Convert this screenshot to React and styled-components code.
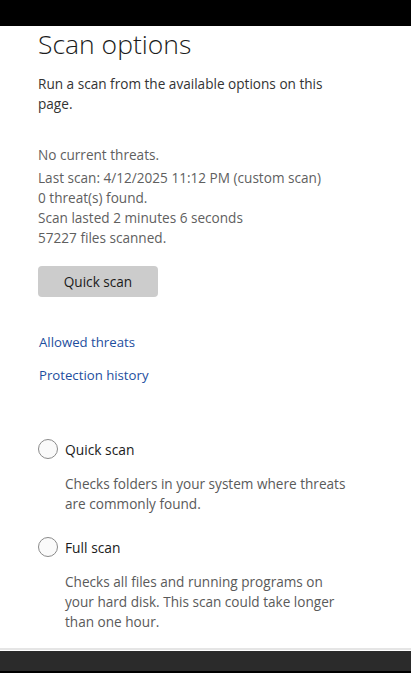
import React from "react";
import styled, { createGlobalStyle } from "styled-components";

const Global = createGlobalStyle`
  html, body { margin: 0; padding: 0; background: #000; }
  body { font-family: "Segoe UI", "Open Sans", "Noto Sans", sans-serif; }
  #root { width: 411px; height: 673px; }
`;

const Frame = styled.div`
  width: 411px;
  height: 673px;
  display: flex;
  flex-direction: column;
  background: #000;
  overflow: hidden;
`;

const TopBar = styled.div`
  height: 26px;
  flex: none;
  background: #000;
`;

const Page = styled.main`
  flex: 1;
  background: #fff;
  padding: 1px 0 0 38px;
  display: flex;
  flex-direction: column;
  border-bottom: 2px solid #e5e5e5;
  overflow: hidden;
`;

const BottomBar = styled.div`
  height: 20px;
  flex: none;
  background: #2b2b2b;
  border-top: 1px solid #fff;
  margin-bottom: 2px;
`;

const Title = styled.h1`
  margin: 0;
  font-family: "Open Sans", sans-serif;
  font-weight: 300;
  font-size: 26.5px;
  line-height: 34px;
  color: #1b1b1b;
`;

const Lead = styled.p`
  margin: 13px 0 0;
  width: 320px;
  font-family: "Open Sans", sans-serif;
  font-size: 13.6px;
  line-height: 20px;
  color: #333;
`;

const Status = styled.div`
  margin-top: 31px;
  font-family: "Open Sans", sans-serif;
  font-size: 13.6px;
  line-height: 20px;
  color: #5f5f5f;
`;

const StatusLine = styled.div`
  margin-top: ${(p) => (p.$gap ? "3px" : "0")};
`;

const Button = styled.button`
  margin-top: 18px;
  width: 120px;
  height: 31px;
  border: none;
  border-radius: 4px;
  background: #cccccc;
  font-family: "Open Sans", sans-serif;
  font-size: 13.6px;
  color: #1b1b1b;
  padding: 0;
`;

const Links = styled.div`
  margin-top: 35px;
  display: flex;
  flex-direction: column;
  align-items: flex-start;
  gap: 13px;
`;

const Link = styled.a`
  font-family: "Open Sans", sans-serif;
  font-size: 13.2px;
  line-height: 20px;
  color: #1d4e9e;
  text-decoration: none;
  margin-left: 1px;
`;

const Options = styled.div`
  margin-top: 54px;
  display: flex;
  flex-direction: column;
  gap: 23px;
`;

const Option = styled.div`
  display: flex;
  flex-direction: column;
`;

const RadioRow = styled.label`
  display: flex;
  align-items: center;
  gap: 7px;
  height: 20px;
`;

const Radio = styled.span`
  width: 18px;
  height: 18px;
  border: 1px solid #8a8a8a;
  border-radius: 50%;
  background: #fafafa;
  flex: none;
`;

const RadioLabel = styled.span`
  font-family: "Open Sans", sans-serif;
  font-size: 13.8px;
  color: #1b1b1b;
`;

const Desc = styled.p`
  margin: 15px 0 0 27px;
  width: 288px;
  font-family: "Open Sans", sans-serif;
  font-size: 13.6px;
  line-height: 20px;
  color: #5a5a5a;
`;

export default function App() {
  return (
    <>
      <Global />
      <Frame>
        <TopBar />
        <Page>
          <Title>Scan options</Title>
          <Lead>Run a scan from the available options on this page.</Lead>
          <Status>
            <StatusLine>No current threats.</StatusLine>
            <StatusLine $gap>Last scan: 4/12/2025 11:12 PM (custom scan)</StatusLine>
            <StatusLine>0 threat(s) found.</StatusLine>
            <StatusLine>Scan lasted 2 minutes 6 seconds</StatusLine>
            <StatusLine>57227 files scanned.</StatusLine>
          </Status>
          <div>
            <Button>Quick scan</Button>
          </div>
          <Links>
            <Link href="#">Allowed threats</Link>
            <Link href="#">Protection history</Link>
          </Links>
          <Options>
            <Option>
              <RadioRow>
                <Radio />
                <RadioLabel>Quick scan</RadioLabel>
              </RadioRow>
              <Desc>Checks folders in your system where threats are commonly found.</Desc>
            </Option>
            <Option>
              <RadioRow>
                <Radio />
                <RadioLabel>Full scan</RadioLabel>
              </RadioRow>
              <Desc>Checks all files and running programs on your hard disk. This scan could take longer than one hour.</Desc>
            </Option>
          </Options>
        </Page>
        <BottomBar />
      </Frame>
    </>
  );
}
